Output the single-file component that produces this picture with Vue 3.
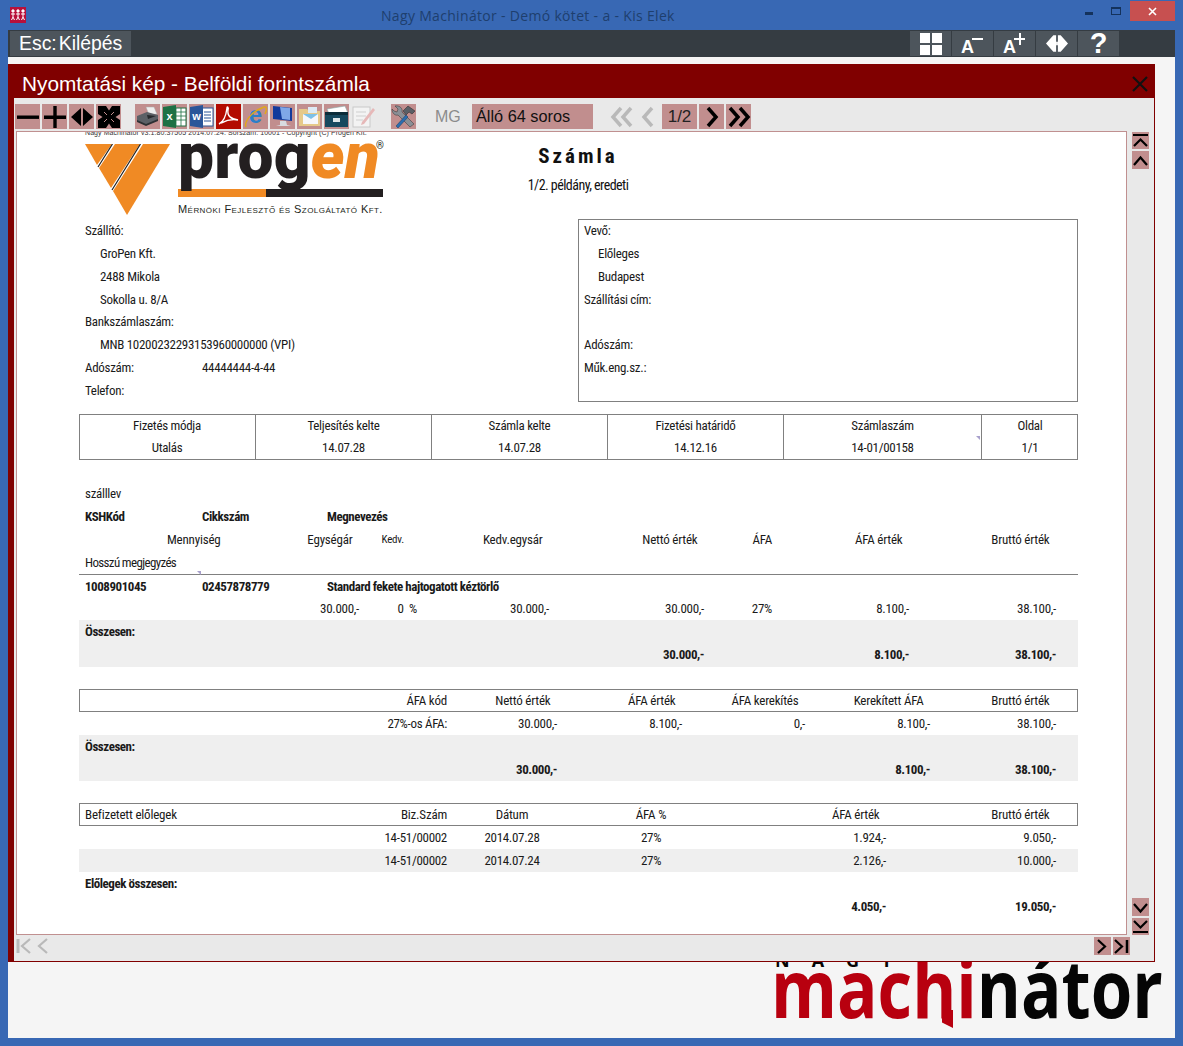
<script setup>
// Bal oldali adatok
const sellerRows = [
  { label: 'Szállító:' },
  { label: 'GroPen Kft.', sub: true },
  { label: '2488 Mikola', sub: true },
  { label: 'Sokolla u. 8/A', sub: true },
  { label: 'Bankszámlaszám:' },
  { label: 'MNB 10200232293153960000000 (VPI)', sub: true },
  { label: 'Adószám:', value: '44444444-4-44' },
  { label: 'Telefon:' }
]

const buyerRows = [
  { label: 'Vevő:' },
  { label: 'Előleges', sub: true },
  { label: 'Budapest', sub: true },
  { label: 'Szállítási cím:' },
  { label: '' },
  { label: 'Adószám:' },
  { label: 'Műk.eng.sz.:' }
]

const infoCols = [
  ['Fizetés módja', 'Utalás'],
  ['Teljesítés kelte', '14.07.28'],
  ['Számla kelte', '14.07.28'],
  ['Fizetési határidő', '14.12.16'],
  ['Számlaszám', '14-01/00158'],
  ['Oldal', '1/1']
]

const itemHead = ['Mennyiség', 'Egységár', 'Kedv.', 'Kedv.egysár', 'Nettó érték', 'ÁFA', 'ÁFA érték', 'Bruttó érték', '']
const itemValues = ['', '30.000,-', '0\u00a0\u00a0%', '30.000,-', '30.000,-', '27%', '8.100,-', '38.100,-', '']
const itemTotal = ['', '', '', '', '30.000,-', '', '8.100,-', '38.100,-', '']

const vatHead = ['ÁFA kód', 'Nettó érték', 'ÁFA érték', 'ÁFA kerekítés', 'Kerekített ÁFA', 'Bruttó érték', '']
const vatValues = ['27%-os ÁFA:', '30.000,-', '8.100,-', '0,-', '8.100,-', '38.100,-', '']
const vatTotal = ['', '30.000,-', '', '', '8.100,-', '38.100,-', '']

const advHead = ['Befizetett előlegek', 'Biz.Szám', 'Dátum', 'ÁFA %', 'ÁFA érték', 'Bruttó érték', '']
const advRows = [
  ['', '14-51/00002', '2014.07.28', '27%', '1.924,-', '9.050,-', ''],
  ['', '14-51/00002', '2014.07.24', '27%', '2.126,-', '10.000,-', '']
]
const advTotal = ['', '', '', '', '4.050,-', '19.050,-', '']
</script>

<template>
  <div class="window">
    <div class="titlebar">
      <svg class="app-icon" width="16" height="16" viewBox="0 0 16 16">
        <rect width="16" height="16" fill="#b8103a" />
        <g fill="#fff" stroke="#fff" stroke-width="1">
          <circle cx="3" cy="4" r="1.2" /><circle cx="8" cy="4" r="1.2" /><circle cx="13" cy="4" r="1.2" />
          <path d="M1 7h4M3 6v4M1.5 13l1.5-3 1.5 3M6 7h4M8 6v4M6.5 13l1.5-3 1.5 3M11 7h4M13 6v4M11.5 13l1.5-3 1.5 3" fill="none" />
        </g>
      </svg>
      <span class="win-title">Nagy Machinátor - Demó kötet - a - Kis Elek</span>
      <div class="win-btns">
        <span class="win-min"></span>
        <span class="win-max"></span>
        <span class="win-close">
          <svg width="9" height="9" viewBox="0 0 9 9"><path d="M1 1l7 7M8 1l-7 7" stroke="#fff" stroke-width="1.6" /></svg>
        </span>
      </div>
    </div>

    <div class="appbar">
      <button class="esc-btn"><span>Esc:</span><span>Kilépés</span></button>
      <div class="appbar-right">
        <button class="app-btn">
          <svg width="22" height="22" viewBox="0 0 22 22" fill="#fff">
            <rect width="10" height="10" /><rect x="12" width="10" height="10" />
            <rect y="12" width="10" height="10" /><rect x="12" y="12" width="10" height="10" />
          </svg>
        </button>
        <button class="app-btn font-btn"><span class="big-a">A</span><i class="minus"></i></button>
        <button class="app-btn font-btn"><span class="big-a">A</span><i class="minus"></i><i class="plus-v"></i></button>
        <button class="app-btn">
          <svg width="22" height="19" viewBox="0 0 24 20" fill="#fff">
            <path d="M0 10l8-9h3v18h-3zM24 10l-8-9h-3v18h3z" />
            <path d="M11 8h2v4h-2z" />
          </svg>
        </button>
        <button class="app-btn question">?</button>
      </div>
    </div>

    <div class="main">
      <div class="brand">
        <div class="brand-top">NAGY</div>
        <div class="brand-name"><span class="red">machi</span>nátor</div>
        <i class="brand-tail"></i>
      </div>

      <div class="dialog">
        <div class="dialog-head">
          <span>Nyomtatási kép - Belföldi forintszámla</span>
          <svg class="dialog-x" width="16" height="16" viewBox="0 0 16 16">
            <path d="M1 1l14 14M15 1L1 15" stroke="#111" stroke-width="2.2" />
          </svg>
        </div>

        <div class="dialog-body">
          <div class="toolbar">
            <button class="tb-btn">
              <svg width="22" height="22" viewBox="0 0 22 22"><rect y="9.5" width="22" height="3.4" /></svg>
            </button>
            <button class="tb-btn">
              <svg width="22" height="22" viewBox="0 0 22 22"><path d="M0 9.5h9.3V0h3.4v9.5H22v3.4h-9.3V22H9.3v-9.100H0z" /></svg>
            </button>
            <button class="tb-btn">
              <svg width="22" height="22" viewBox="0 0 22 22"><path d="M10 2v18L0 11zM12 2v18l10-9z" /></svg>
            </button>
            <button class="tb-btn">
              <svg width="22" height="22" viewBox="0 0 22 22">
                <path d="M0 0h22v22H0z" />
                <path fill="#c18e8e" d="M8 0h6l-3 4.500zM8 22h6l-3-4.500zM0 8v6l4.500-3zM22 8v6l-4.500-3z" />
                <path stroke="#c18e8e" stroke-width="1" d="M6 6l3 3M16 6l-3 3M6 16l3-3M16 16l-3-3" />
              </svg>
            </button>

            <div class="tb-icons">
              <button class="tb-btn">
                <svg width="25" height="25" viewBox="0 0 25 25">
                  <path d="M11 3h8l3 7-8 1z" fill="#eee" stroke="#aaa" stroke-width=".5" />
                  <path d="M2 12l10-4 11 3v5l-12 5-9-4z" fill="#5c6066" />
                  <path d="M2 16l9 4 12-5v2l-12 5-9-4z" fill="#2d3033" />
                  <path d="M12 11l9 1-8 3z" fill="#26292c" />
                </svg>
              </button>
              <button class="tb-btn">
                <svg width="25" height="25" viewBox="0 0 25 25">
                  <rect x="11" y="4" width="13" height="18" fill="#fff" stroke="#1e7145" />
                  <path d="M14 4v18M19 4v18M11 8h13M11 12h13M11 16h13" stroke="#1e7145" stroke-width=".8" />
                  <path d="M1 3l13-2v23L1 22z" fill="#1e7145" />
                  <text x="7.500" y="16" class="ic-letter">x</text>
                </svg>
              </button>
              <button class="tb-btn">
                <svg width="25" height="25" viewBox="0 0 25 25">
                  <rect x="11" y="4" width="13" height="18" fill="#fff" stroke="#2a5699" />
                  <path d="M15 8h7M15 11h7M15 14h7M15 17h7" stroke="#2a5699" stroke-width="1.200" />
                  <path d="M1 3l13-2v23L1 22z" fill="#2a5699" />
                  <text x="7.500" y="16" class="ic-letter">w</text>
                </svg>
              </button>
              <button class="tb-btn">
                <svg width="25" height="25" viewBox="0 0 25 25">
                  <rect width="25" height="25" fill="#b30b00" />
                  <path d="M3 20c4-2 7-8 8-16 0-2 2-1 1 2-1 6 3 9 10 10-5-1-11 0-17 3" fill="none" stroke="#fff" stroke-width="1.400" />
                </svg>
              </button>
              <button class="tb-btn">
                <svg width="25" height="25" viewBox="0 0 25 25">
                  <text x="12.500" y="19" class="ic-e">e</text>
                  <path d="M3 23c-2-4 4-15 18-20 3-1 3 3 1 7" fill="none" stroke="#e0a81c" stroke-width="1.500" />
                </svg>
              </button>
              <button class="tb-btn">
                <svg width="25" height="25" viewBox="0 0 25 25">
                  <path d="M3 2l19 2v13L3 15z" fill="#123a9c" />
                  <path d="M10 3l10 1v12l-8-1z" fill="#7fa7e8" />
                  <path d="M10 17h6l1 4 4 1H6l4-1z" fill="#d8dbe0" />
                </svg>
              </button>
              <button class="tb-btn">
                <svg width="25" height="25" viewBox="0 0 25 25">
                  <path d="M2 5h8l2 2h11v15H2z" fill="#e6c98a" />
                  <rect x="6" y="10" width="15" height="10" fill="#f6f7fb" />
                  <path d="M6 10h15l-7 5z" fill="#7cc0e8" />
                  <rect x="11" y="3" width="9" height="6" fill="#ddeaf5" />
                </svg>
              </button>
              <button class="tb-btn">
                <svg width="25" height="25" viewBox="0 0 25 25">
                  <path d="M3 5l18-3 3 7-18 3z" fill="#fff" stroke="#8aa" stroke-width=".6" />
                  <path d="M1 8h23v15H1z" fill="#17485e" />
                  <path d="M1 8h23v3H1z" fill="#0c2c3a" />
                  <rect x="9" y="14" width="7" height="4" fill="#dfe7ea" />
                </svg>
              </button>
              <button class="tb-btn plain">
                <svg width="25" height="25" viewBox="0 0 25 25">
                  <rect x="2" y="3" width="17" height="20" fill="#f3f3f3" stroke="#c9c9c9" />
                  <path d="M5 8h10M5 12h10M5 16h7" stroke="#cfcfcf" />
                  <path d="M11 18l11-14 2 2-11 14-3 1z" fill="#e6b8b8" />
                </svg>
              </button>
              <button class="tb-btn tools">
                <svg width="25" height="25" viewBox="0 0 25 25">
                  <path d="M4 2l3 3-1 3-3-1-2-2c0 4 3 7 6 6l12 12 4-3L11 8c1-3-2-7-7-6z" fill="#8a8f96" stroke="#333" stroke-width=".5" />
                  <path d="M5 22l10-11 2 2-10 11z" fill="#2a6db0" stroke="#1b3a5c" stroke-width=".5" />
                  <path d="M12 7l5-5 7 5-3 3-3-2-3 3z" fill="#5a5f66" stroke="#222" stroke-width=".5" />
                </svg>
              </button>
            </div>

            <span class="mg">MG</span>
            <button class="page-style">Álló 64 soros</button>

            <div class="pager">
              <button class="pg-btn off">
                <svg width="24" height="22" viewBox="0 0 24 22"><path d="M11 2L3 11l8 9M21 2l-8 9 8 9" /></svg>
              </button>
              <button class="pg-btn off">
                <svg width="24" height="22" viewBox="0 0 24 22"><path d="M16 2l-8 9 8 9" /></svg>
              </button>
              <span class="pg-num">1/2</span>
              <button class="pg-btn on">
                <svg width="24" height="22" viewBox="0 0 24 22"><path d="M8 2l8 9-8 9" /></svg>
              </button>
              <button class="pg-btn on">
                <svg width="24" height="22" viewBox="0 0 24 22"><path d="M3 2l8 9-8 9M13 2l8 9-8 9" /></svg>
              </button>
            </div>
          </div>

          <div class="viewer">
            <div class="paper">
              <div class="stamp">Nagy Machinátor v3.1.80.37505 2014.07.24. Sorszám: 10001 - Copyright (C) Progen Kft.</div>

              <div class="head">
                <div class="logo">
                  <svg class="logo-mark" width="86" height="72" viewBox="0 0 86 72">
                    <path d="M0 0h27L12 21z" fill="#f08a24" />
                    <path d="M30 0h25L26 44 14 24z" fill="#f08a24" />
                    <path d="M58 0h27L42 71 28 47z" fill="#f08a24" />
                    <path d="M27.500 0L13 23M55.500 0L27 46" stroke="#222" stroke-width="1.200" />
                  </svg>
                  <div class="logo-text">
                    <div class="logo-word">prog<em>en</em><sup>®</sup></div>
                    <div class="logo-bar"><i></i></div>
                    <div class="logo-sub">Mérnöki Fejlesztő és Szolgáltató Kft.</div>
                  </div>
                </div>
                <div class="doc-title">
                  <div class="doc-h">Számla</div>
                  <div class="doc-sub">1/2. példány, eredeti</div>
                </div>
              </div>

              <div class="parties">
                <div class="seller">
                  <div v-for="(r, i) in sellerRows" :key="i" class="row" :class="{ sub: r.sub }">
                    <span class="seller-label">{{ r.label }}</span><span v-if="r.value">{{ r.value }}</span>
                  </div>
                </div>
                <div class="buyer">
                  <div v-for="(r, i) in buyerRows" :key="i" class="row" :class="{ sub: r.sub }">{{ r.label }}</div>
                </div>
              </div>

              <div class="info">
                <div v-for="(c, i) in infoCols" :key="i" class="info-col">
                  <div>{{ c[0] }}</div>
                  <div>{{ c[1] }}</div>
                </div>
                <i class="tick tick-info"></i>
              </div>

              <div class="items">
                <div class="row pad lift">szálllev</div>
                <div class="row pad g-top strong">
                  <span>KSHKód</span><span>Cikkszám</span><span>Megnevezés</span>
                </div>
                <div class="row g-items hdr">
                  <span v-for="(t, i) in itemHead" :key="i" :class="{ small: t === 'Kedv.', flush: t === 'ÁFA' }">{{ t }}</span>
                </div>
                <div class="row pad tight">Hosszú megjegyzés</div>
                <div class="rule"><i class="tick tick-rule"></i></div>
                <div class="row pad g-top strong">
                  <span>1008901045</span><span>02457878779</span><span>Standard fekete hajtogatott kéztörlő</span>
                </div>
                <div class="row g-items">
                  <span v-for="(t, i) in itemValues" :key="i">{{ t }}</span>
                </div>
                <div class="grey total">
                  <div class="row pad strong">Összesen:</div>
                  <div class="row g-items strong">
                    <span v-for="(t, i) in itemTotal" :key="i">{{ t }}</span>
                  </div>
                </div>
              </div>

              <div class="vat">
                <div class="row box g-vat hdr">
                  <span v-for="(t, i) in vatHead" :key="i" :class="{ flush: i === 0 }">{{ t }}</span>
                </div>
                <div class="row g-vat">
                  <span v-for="(t, i) in vatValues" :key="i">{{ t }}</span>
                </div>
                <div class="grey total">
                  <div class="row pad strong">Összesen:</div>
                  <div class="row g-vat strong">
                    <span v-for="(t, i) in vatTotal" :key="i">{{ t }}</span>
                  </div>
                </div>
              </div>

              <div class="advance">
                <div class="row box g-adv hdr">
                  <span v-for="(t, i) in advHead" :key="i" :class="{ first: i === 0, flush: i === 1, mid: i === 2 || i === 3 }">{{ t }}</span>
                </div>
                <div v-for="(r, n) in advRows" :key="n" class="row g-adv" :class="{ grey: n === 1 }">
                  <span v-for="(t, i) in r" :key="i" :class="{ mid: i === 2 || i === 3 }">{{ t }}</span>
                </div>
                <div class="row pad strong">Előlegek összesen:</div>
                <div class="row g-adv strong">
                  <span v-for="(t, i) in advTotal" :key="i">{{ t }}</span>
                </div>
              </div>
            </div>

            <div class="side">
              <div class="side-group">
                <button class="mini">
                  <svg width="15" height="15" viewBox="0 0 15 15"><path d="M0 2h15" stroke-width="2" /><path d="M1 13l6.500-6.500L14 13" /></svg>
                </button>
                <button class="mini tall">
                  <svg width="15" height="15" viewBox="0 0 15 15"><path d="M1 12l6.500-7.500L14 12" /></svg>
                </button>
              </div>
              <div class="side-group">
                <button class="mini tall">
                  <svg width="15" height="15" viewBox="0 0 15 15"><path d="M1 4l6.500 7.500L14 4" /></svg>
                </button>
                <button class="mini">
                  <svg width="15" height="15" viewBox="0 0 15 15"><path d="M1 2l6.500 6.500L14 2" /><path d="M0 13h15" stroke-width="2" /></svg>
                </button>
              </div>
            </div>
          </div>

          <div class="hbar">
            <div class="hbar-group off">
              <svg width="15" height="16" viewBox="0 0 15 16"><path d="M2 1v14" stroke-width="3" /><path d="M14 1L6 8l8 7" /></svg>
              <svg width="12" height="16" viewBox="0 0 12 16"><path d="M10 1L2 8l8 7" /></svg>
            </div>
            <div class="hbar-group on">
              <button class="mini wide">
                <svg width="15" height="15" viewBox="0 0 15 15"><path d="M3 1l7 6.500L3 14" /></svg>
              </button>
              <button class="mini wide">
                <svg width="15" height="15" viewBox="0 0 15 15"><path d="M1 1l7 6.500L1 14" /><path d="M13 1v13" stroke-width="2.500" /></svg>
              </button>
            </div>
          </div>
        </div>
      </div>
    </div>
  </div>
</template>

<style>
html, body { margin: 0; padding: 0; }
</style>

<style scoped>
button { border: none; padding: 0; margin: 0; font: inherit; cursor: pointer; }

.window {
  width: 1183px;
  height: 1046px;
  box-sizing: border-box;
  padding: 0 8px 8px;
  background: #3868b4;
  display: flex;
  flex-direction: column;
  overflow: hidden;
  font-family: "Liberation Sans", Arial, sans-serif;
}

/* Ablak fejléc */
.titlebar {
  height: 30px;
  flex: none;
  display: flex;
  align-items: center;
  position: relative;
}
.app-icon { margin: 0 0 0 2px; position: relative; top: 0; }
.win-title {
  position: absolute;
  left: 373px;
  top: 6px;
  font-family: "Open Sans", sans-serif;
  font-size: 14px;
  color: #1e3f6e;
  letter-spacing: 0.32px;
  white-space: nowrap;
}
.win-btns {
  margin-left: auto;
  align-self: flex-start;
  display: flex;
  align-items: flex-start;
}
.win-min { width: 8px; height: 3px; background: #14325c; margin: 12px 18px 0 0; }
.win-max { width: 8px; height: 5px; border: 1px solid #14325c; border-top-width: 2px; margin: 7px 9px 0 0; }
.win-close {
  width: 45px;
  height: 20px;
  margin-top: 1px;
  background: #c75050;
  display: flex;
  align-items: center;
  justify-content: center;
}

/* Sötét menüsor */
.appbar {
  height: 27px;
  flex: none;
  background: #353c42;
  display: flex;
  align-items: flex-start;
  padding: 1px 0 0 2px;
  box-sizing: border-box;
}
.esc-btn {
  width: 121px;
  height: 25px;
  background: #4d555c;
  color: #fff;
  font-size: 19.400px;
  display: flex;
  gap: 2px;
  align-items: center;
  padding-left: 9px;
  box-sizing: border-box;
}
.appbar-right {
  margin-left: auto;
  margin-right: 56px;
  display: flex;
  gap: 1px;
}
.app-btn {
  width: 41px;
  height: 25px;
  background: #4d555c;
  color: #fff;
  display: flex;
  align-items: center;
  justify-content: center;
  position: relative;
}
.font-btn { justify-content: flex-start; }
.big-a { font-weight: bold; font-size: 18px; margin: 7px 0 0 9px; line-height: 20px; }
.minus { position: absolute; left: 20px; top: 7px; width: 11px; height: 2px; background: #fff; }
.plus-v { position: absolute; left: 24.500px; top: 2px; width: 2px; height: 12px; background: #fff; }
.question { font-weight: bold; font-size: 29px; line-height: 25px; }

/* Munkaterület */
.main {
  flex: 1;
  min-height: 0;
  position: relative;
  background: #f5f5f5;
  padding-top: 7px;
}
.brand {
  position: absolute;
  left: 763px;
  top: 893px;
  color: #050505;
  font-family: "Open Sans", sans-serif;
  font-weight: 700;
  white-space: nowrap;
}
.brand-top {
  font-size: 18px;
  line-height: 18px;
  letter-spacing: 22px;
  margin-left: 4px;
  position: relative;
  top: 1px;
}
.brand-name {
  font-size: 80px;
  line-height: 50px;
  height: 50px;
  margin-top: -6px;
  transform: scaleX(0.84);
  transform-origin: left center;
}
.brand .red { color: #b8000f; }
.brand-tail {
  position: absolute;
  left: 171px;
  top: 60px;
  width: 11px;
  height: 18px;
  background: #b8000f;
  clip-path: polygon(0 0, 100% 0, 100% 100%, 0 70%);
}

.dialog {
  width: 1147px;
  height: 898px;
  position: relative;
  display: flex;
  flex-direction: column;
}
.dialog-head {
  height: 34px;
  flex: none;
  background: #800000;
  color: #fff;
  font-size: 20.800px;
  display: flex;
  align-items: center;
  justify-content: space-between;
  padding: 6px 7px 0 14px;
  box-sizing: border-box;
}
.dialog-body {
  flex: 1;
  min-height: 0;
  background: #e9e9e9;
  border-left: 6px solid #800000;
  border-right: 1px solid #800000;
  border-bottom: 1px solid #800000;
  display: flex;
  flex-direction: column;
}

/* Eszköztár */
.toolbar {
  height: 33px;
  flex: none;
  box-sizing: border-box;
  padding: 6px 0 2px 1px;
  display: flex;
  align-items: stretch;
  gap: 2px;
}
.tb-btn {
  width: 25px;
  background: #c18e8e;
  display: flex;
  align-items: center;
  justify-content: center;
  color: #000;
}
.tb-btn.plain { background: transparent; }
.tb-icons { display: flex; gap: 2px; margin-left: 12px; }
.tb-btn.tools { margin-left: 13px; }
.ic-letter {
  font-family: "Liberation Sans", sans-serif;
  font-size: 11px;
  font-weight: bold;
  fill: #fff;
  text-anchor: middle;
}
.ic-e {
  font-family: "Liberation Sans", sans-serif;
  font-size: 24px;
  font-weight: bold;
  fill: #2b7fc9;
  text-anchor: middle;
}
.mg {
  margin-left: 17px;
  width: 35px;
  font-size: 16px;
  color: #8c8c8c;
  line-height: 25px;
}
.page-style {
  width: 121px;
  background: #c18e8e;
  color: #111;
  font-size: 16.300px;
  text-align: left;
  padding-left: 4px;
}
.pager { margin-left: 15px; display: flex; gap: 2px; }
.pg-btn {
  width: 25px;
  background: transparent;
  display: flex;
  align-items: center;
  justify-content: center;
}
.pg-btn.off { width: 24px; }
.pg-btn svg { fill: none; stroke-width: 3.500; }
.pg-btn.off svg { stroke: #b9b9b9; }
.pg-btn.on { background: #c18e8e; }
.pg-btn.on svg { stroke: #000; }
.pg-num {
  width: 35px;
  background: #c18e8e;
  color: #222;
  font-size: 17px;
  line-height: 25px;
  text-align: center;
}

/* Papír */
.viewer {
  height: 804px;
  flex: none;
  display: flex;
  padding-left: 2px;
}
.paper {
  width: 1111px;
  box-sizing: border-box;
  background: #fff;
  border: 1px solid #c09090;
  overflow: hidden;
  padding: 0 48px 0 62px;
  font-family: "Roboto Condensed", "Liberation Sans", sans-serif;
  font-size: 13px;
  letter-spacing: -0.3px;
  color: #1a1a1a;
}
.stamp {
  font-family: "Liberation Sans", sans-serif;
  font-size: 7px;
  letter-spacing: 0.07px;
  line-height: 8px;
  height: 8px;
  margin: -3px 0 0 6px;
  color: #333;
  white-space: nowrap;
}
.head {
  height: 78px;
  margin-top: 4px;
  display: flex;
  padding-left: 6px;
}
.logo { width: 303px; display: flex; flex: none; }
.logo-mark { margin-top: 3px; flex: none; }
.logo-text { margin-left: 7px; width: 205px; flex: none; color: #231f20; }
.logo-word {
  font-family: Roboto, sans-serif;
  font-weight: 900;
  font-size: 64px;
  line-height: 32px;
  height: 47px;
  letter-spacing: 0.2px;
  white-space: nowrap;
  position: relative;
}
.logo-word em { color: #f08a24; font-style: italic; }
.logo-word sup {
  position: absolute;
  left: 198px;
  top: 0;
  font-size: 10px;
  line-height: 10px;
  font-weight: 400;
  letter-spacing: 0;
}
.logo-bar { height: 8px; background: #231f20; margin-top: 1px; }
.logo-bar i { display: block; width: 88px; height: 8px; background: #f08a24; }
.logo-sub {
  font-family: "Liberation Sans", sans-serif;
  font-variant: small-caps;
  font-size: 11px;
  line-height: 12px;
  margin-top: 6px;
  letter-spacing: 0.44px;
  white-space: nowrap;
  color: #231f20;
}
.doc-title { width: 380px; flex: none; text-align: center; color: #111; padding-top: 2px; }
.doc-h { font-size: 21px; line-height: 26px; font-weight: 700; letter-spacing: 3px; }
.doc-sub { font-size: 14px; line-height: 18px; margin-top: 7px; letter-spacing: -0.55px; }

.row { height: 22.860px; line-height: 24px; white-space: nowrap; }
.row.lift { line-height: 22px; }
.pad { padding-left: 6px; }
.strong { font-weight: 700; letter-spacing: -0.45px; }
.tight { letter-spacing: -0.65px; }

.parties { display: flex; }
.seller { width: 499px; flex: none; padding-left: 6px; box-sizing: border-box; }
.seller .row.sub { padding-left: 15px; }
.seller-label { display: inline-block; min-width: 117px; }
.buyer {
  width: 500px;
  height: 183px;
  box-sizing: border-box;
  box-shadow: inset 0 0 0 1px #808080;
  padding-left: 6px;
}
.buyer .row.sub { padding-left: 14px; }

.info {
  margin-top: 12px;
  height: 46px;
  display: grid;
  grid-template-columns: 176px 176px 176px 176px 198px 97px;
  box-shadow: inset 0 0 0 1px #808080;
  position: relative;
}
.info-col { text-align: center; line-height: 22px; padding-top: 1px; }
.info-col + .info-col { border-left: 1px solid #808080; }
.tick {
  position: absolute;
  width: 0;
  height: 0;
  border-top: 4px solid #a8a0cc;
  border-left: 4px solid transparent;
}
.tick-info { left: 897px; top: 22px; }
.tick-rule { left: 118px; top: -3px; }

.items { margin-top: 22.600px; }
.g-top { display: grid; grid-template-columns: 117px 125px 1fr; }
.g-items { display: grid; grid-template-columns: 148px 132px 58px 132px 155px 68px 137px 147px 22px; text-align: right; }
.g-vat { display: grid; grid-template-columns: 368px 110px 125px 123px 125px 126px 22px; text-align: right; }
.g-adv { display: grid; grid-template-columns: 200px 168px 130px 148px 161px 170px 22px; text-align: right; }
.hdr { letter-spacing: -0.2px; }
.hdr span { padding-right: 6.500px; }
.hdr span.flush { padding-right: 0; }
.hdr span.small { font-size: 11px; padding-right: 13px; }
.hdr span.first { text-align: left; padding-left: 6px; }
.g-adv .mid, .hdr .mid { text-align: center; padding-right: 0; }
.rule { height: 1px; background: #808080; position: relative; margin-top: -0.500px; }
.grey { background: #efefef; }
.total { height: 46.700px; }
.vat { margin-top: 22px; }
.advance { margin-top: 22px; }
.box { box-shadow: inset 0 0 0 1px #808080; }

/* Görgető gombok */
.side {
  width: 17px;
  margin-left: 5px;
  display: flex;
  flex-direction: column;
  justify-content: space-between;
  padding: 1px 0 0;
  box-sizing: border-box;
}
.side-group { display: flex; flex-direction: column; gap: 2px; }
.mini {
  width: 17px;
  height: 17px;
  background: #c18e8e;
  display: flex;
  align-items: center;
  justify-content: center;
}
.mini.tall { height: 18px; }
.mini.wide { width: 17px; height: 18px; }
.mini svg, .hbar-group svg { fill: none; stroke: #000; stroke-width: 2.200; }
.hbar {
  flex: 1;
  display: flex;
  justify-content: space-between;
  padding: 2px 24px 0 2px;
}
.hbar-group { display: flex; align-items: flex-start; gap: 2px; }
.hbar-group.off svg { stroke: #b9b9b9; stroke-width: 2.200; margin-top: 1px; }
.hbar-group.off { gap: 6px; }
</style>
